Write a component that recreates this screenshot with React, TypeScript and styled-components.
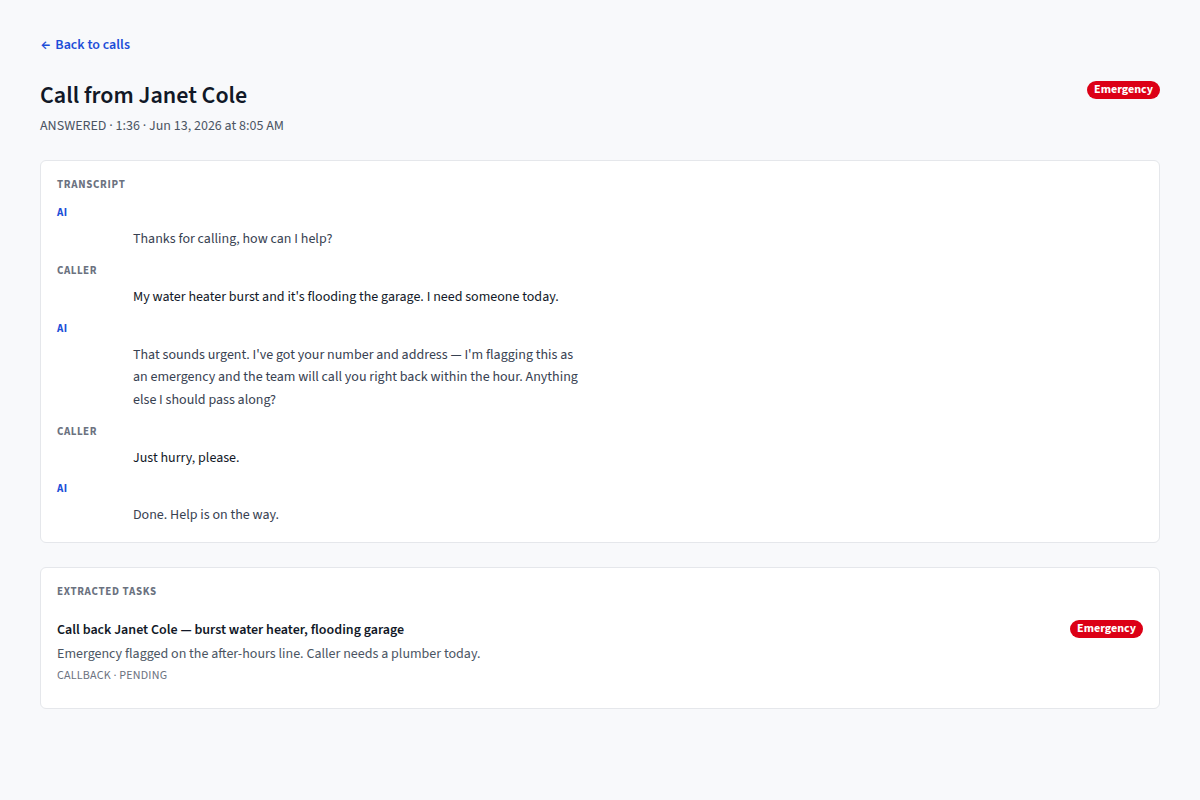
import styled, { createGlobalStyle } from "styled-components";

const GlobalStyle = createGlobalStyle`
  * {
    box-sizing: border-box;
  }
  body {
    margin: 0;
    background: #f8f9fb;
    font-family: "Source Sans 3", Lato, "Liberation Sans", sans-serif;
    color: #111827;
  }
`;

const Page = styled.div`
  padding: 33px 40px 40px;
`;

const BackLink = styled.a`
  display: inline-flex;
  align-items: center;
  gap: 5px;
  padding-left: 1px;
  font-size: 14px;
  line-height: 24px;
  font-weight: 600;
  color: #1d4ed8;
  text-decoration: none;
  cursor: pointer;
`;

const Arrow = styled.span`
  font-size: 15px;
`;

const Header = styled.header`
  display: flex;
  justify-content: space-between;
  align-items: flex-start;
  margin-top: 23px;
  margin-bottom: 24px;
`;

const Title = styled.h1`
  margin: 0;
  font-size: 24px;
  line-height: 32px;
  font-weight: 600;
  color: #111827;
`;

const Meta = styled.div`
  margin-top: 4px;
  font-size: 14px;
  line-height: 20px;
  color: #4b5563;
`;

const Badge = styled.span`
  display: inline-block;
  padding: 1px 7px;
  border-radius: 999px;
  background: #dc0016;
  color: #fff;
  font-size: 12px;
  line-height: 16px;
  font-weight: 700;
  margin-top: 1px;
`;

const Card = styled.section`
  background: #fff;
  border: 1px solid #e5e7eb;
  border-radius: 6px;
  padding: 16px 16px 15px;
  & + & {
    margin-top: 24px;
  }
`;

const SectionLabel = styled.h2`
  margin: 0 0 12px;
  font-size: 11px;
  line-height: 16px;
  font-weight: 700;
  letter-spacing: 0.7px;
  text-transform: uppercase;
  color: #6b7280;
`;

const Turns = styled.div`
  display: flex;
  flex-direction: column;
  gap: 12.5px;
`;

const Turn = styled.div`
  display: flex;
  flex-direction: column;
  gap: 7px;
`;

const Speaker = styled.div<{ $ai: boolean }>`
  font-size: 11px;
  line-height: 16px;
  font-weight: 700;
  letter-spacing: 0.5px;
  text-transform: uppercase;
  color: ${({ $ai }) => ($ai ? "#1d4ed8" : "#6b7280")};
`;

const Message = styled.p<{ $ai: boolean }>`
  margin: 0 0 0 76px;
  max-width: 450px;
  font-size: 14px;
  line-height: 22.4px;
  color: ${({ $ai }) => ($ai ? "#374151" : "#111827")};
`;

const Task = styled.div`
  display: flex;
  justify-content: space-between;
  align-items: flex-start;
  padding: 7px 0 8px;
`;

const TaskTitle = styled.div`
  font-size: 14px;
  line-height: 22px;
  font-weight: 600;
  color: #111827;
`;

const TaskDesc = styled.div`
  margin-top: 2px;
  font-size: 14px;
  line-height: 22px;
  color: #4b5563;
`;

const TaskMeta = styled.div`
  margin-top: 2px;
  font-size: 12px;
  line-height: 18px;
  text-transform: uppercase;
  letter-spacing: 0.2px;
  color: #6b7280;
`;

const transcript = [
  { speaker: "AI", text: "Thanks for calling, how can I help?" },
  {
    speaker: "Caller",
    text: "My water heater burst and it's flooding the garage. I need someone today.",
  },
  {
    speaker: "AI",
    text: "That sounds urgent. I've got your number and address — I'm flagging this as an emergency and the team will call you right back within the hour. Anything else I should pass along?",
  },
  { speaker: "Caller", text: "Just hurry, please." },
  { speaker: "AI", text: "Done. Help is on the way." },
];

const App = () => {
  return (
    <Page>
      <GlobalStyle />
      <BackLink>
        <Arrow>←</Arrow>
        Back to calls
      </BackLink>
      <Header>
        <div>
          <Title>Call from Janet Cole</Title>
          <Meta>ANSWERED · 1:36 · Jun 13, 2026 at 8:05 AM</Meta>
        </div>
        <Badge>Emergency</Badge>
      </Header>

      <Card>
        <SectionLabel>Transcript</SectionLabel>
        <Turns>
          {transcript.map((t, i) => (
            <Turn key={i}>
              <Speaker $ai={t.speaker === "AI"}>{t.speaker}</Speaker>
              <Message $ai={t.speaker === "AI"}>{t.text}</Message>
            </Turn>
          ))}
        </Turns>
      </Card>

      <Card>
        <SectionLabel>Extracted tasks</SectionLabel>
        <Task>
          <div>
            <TaskTitle>Call back Janet Cole — burst water heater, flooding garage</TaskTitle>
            <TaskDesc>
              Emergency flagged on the after-hours line. Caller needs a plumber today.
            </TaskDesc>
            <TaskMeta>Callback · Pending</TaskMeta>
          </div>
          <Badge>Emergency</Badge>
        </Task>
      </Card>
    </Page>
  );
};

export default App;
